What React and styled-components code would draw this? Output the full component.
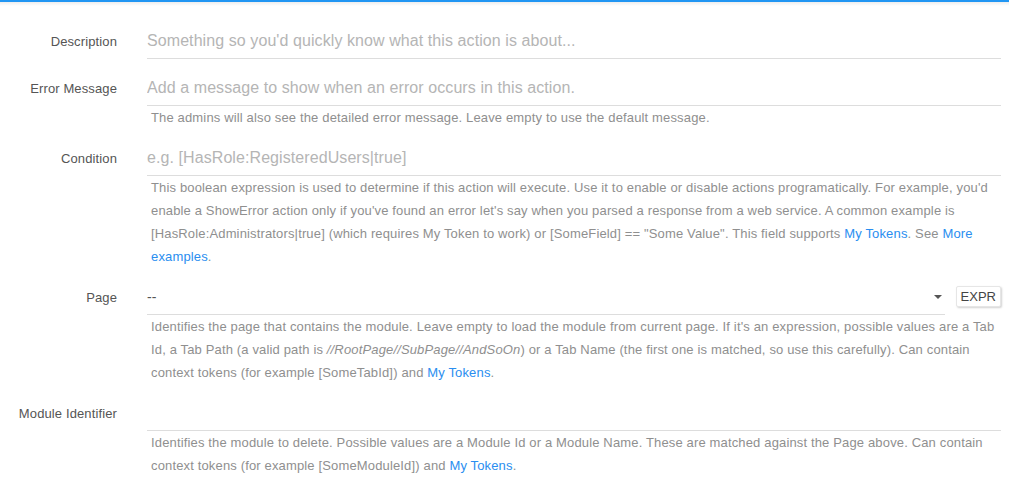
import React from "react";
import styled, { createGlobalStyle } from "styled-components";

const Global = createGlobalStyle`
  html, body { margin: 0; padding: 0; background: #fff; }
  body { font-family: "Liberation Sans", Arial, sans-serif; }
  * { box-sizing: border-box; }
`;

const Page = styled.div`
  width: 1009px;
  min-height: 493px;
  border-top: 2px solid #2196f3;
  background: linear-gradient(to bottom, rgba(0,0,0,0.07), rgba(0,0,0,0) 4px) no-repeat;
  padding: 22px 8px 0 0;
`;

const Group = styled.div`
  display: grid;
  grid-template-columns: 117px 1fr;
  column-gap: 30px;
  margin-bottom: 12px;
`;

const Label = styled.label`
  grid-column: 1;
  height: 35px;
  display: flex;
  align-items: center;
  justify-content: flex-end;
  font-size: 13px;
  letter-spacing: 0.12px;
  color: #555;
  white-space: nowrap;
`;

const Field = styled.div`
  grid-column: 2;
  display: flex;
  flex-direction: column;
`;

const InputRow = styled.div`
  display: flex;
  align-items: flex-start;
  gap: 11px;
`;

const Input = styled.input`
  width: 100%;
  height: 35px;
  flex: none;
  border: none;
  border-bottom: 1px solid #ddd;
  outline: none;
  padding: 0 0 1px 0;
  font-family: inherit;
  font-size: 16px;
  letter-spacing: 0.08px;
  color: #555;
  background: transparent;
  &::placeholder { color: #b5b5b5; }
`;

const Select = styled.div`
  flex: 1;
  height: 35px;
  border-bottom: 1px solid #ddd;
  display: flex;
  align-items: center;
  justify-content: space-between;
  padding: 0 3px 1px 0;
  font-size: 14px;
  color: #555;
`;

const Caret = styled.span`
  width: 0;
  height: 0;
  border-left: 4px solid transparent;
  border-right: 4px solid transparent;
  border-top: 4px solid #555;
`;

const Button = styled.button`
  margin-top: 6px;
  height: 21px;
  padding: 0 4px;
  font-family: inherit;
  font-size: 13px;
  color: #444;
  background: #fff;
  border: 1px solid #e6e6e6;
  border-radius: 2px;
  box-shadow: 1px 1px 2px rgba(0,0,0,0.18);
`;

const Help = styled.div`
  padding: 0 0 0 4px;
  font-size: 13px;
  letter-spacing: 0.15px;
  line-height: 23px;
  color: #8f8f8f;
  em { font-style: italic; }
`;

const Link = styled.a`
  color: #2a8ef0;
  text-decoration: none;
`;

export default function App() {
  return (
    <>
      <Global />
      <Page>
        <Group>
          <Label>Description</Label>
          <Field>
            <Input placeholder="Something so you'd quickly know what this action is about..." />
          </Field>
        </Group>
        <Group>
          <Label>Error Message</Label>
          <Field>
            <Input placeholder="Add a message to show when an error occurs in this action." />
            <Help>The admins will also see the detailed error message. Leave empty to use the default message.</Help>
          </Field>
        </Group>
        <Group>
          <Label>Condition</Label>
          <Field>
            <Input placeholder="e.g. [HasRole:RegisteredUsers|true]" />
            <Help>
              This boolean expression is used to determine if this action will execute. Use it to enable or disable actions programatically. For example, you'd enable a ShowError action only if you've found an error let's say when you parsed a response from a web service. A common example is [HasRole:Administrators|true] (which requires My Token to work) or [SomeField] == "Some Value". This field supports <Link href="#">My Tokens</Link>. See <Link href="#">More examples</Link>.
            </Help>
          </Field>
        </Group>
        <Group>
          <Label>Page</Label>
          <Field>
            <InputRow>
              <Select>
                <span>--</span>
                <Caret />
              </Select>
              <Button>EXPR</Button>
            </InputRow>
            <Help>
              Identifies the page that contains the module. Leave empty to load the module from current page. If it's an expression, possible values are a Tab Id, a Tab Path (a valid path is <em>//RootPage//SubPage//AndSoOn</em>) or a Tab Name (the first one is matched, so use this carefully). Can contain context tokens (for example [SomeTabId]) and <Link href="#">My Tokens</Link>.
            </Help>
          </Field>
        </Group>
        <Group>
          <Label>Module Identifier</Label>
          <Field>
            <Input />
            <Help>
              Identifies the module to delete. Possible values are a Module Id or a Module Name. These are matched against the Page above. Can contain context tokens (for example [SomeModuleId]) and <Link href="#">My Tokens</Link>.
            </Help>
          </Field>
        </Group>
      </Page>
    </>
  );
}
